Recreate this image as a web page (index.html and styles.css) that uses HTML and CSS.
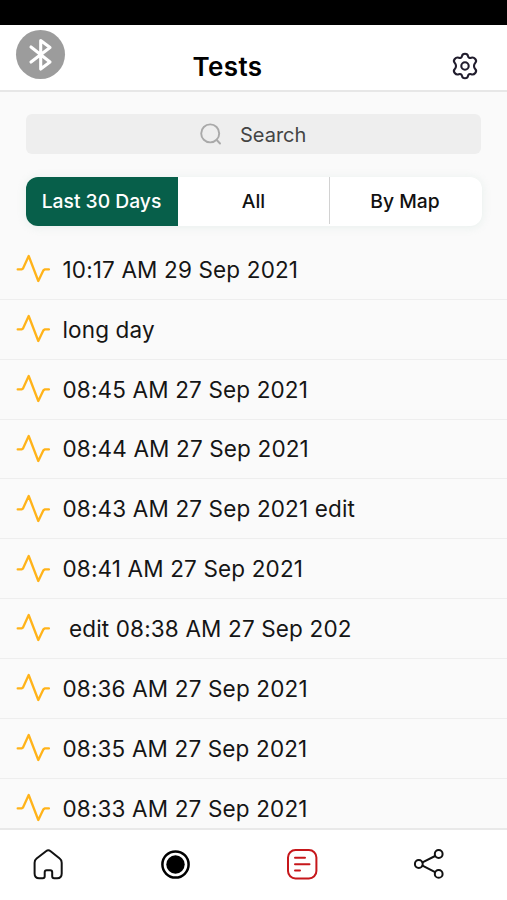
FILE: index.html
```html
<!DOCTYPE html>
<html lang="en">
<head>
<meta charset="utf-8">
<title>Tests</title>
<link rel="stylesheet" href="styles.css">
</head>
<body>
<svg class="symbols" aria-hidden="true">
  <symbol id="pulse" viewBox="0 0 34 30">
    <path d="M1.700 15.400H5.700L7 14.500L12.700 2L22.300 27L27.300 16.500L28.700 15.400H33"/>
  </symbol>
</svg>
<div class="app">
  <div class="status"></div>
  <header class="header">
    <button class="bluetooth" aria-label="Bluetooth">
      <svg width="49" height="49" viewBox="0 0 49 49"><path d="M15 17L34 32L24.700 39V10.500L34 17.500L15 32"/></svg>
    </button>
    <h1 class="title">Tests</h1>
    <button class="settings" aria-label="Settings">
      <svg width="28" height="28" viewBox="0 0 28 28">
        <path d="M11 4.100C11.500 .9 16.500 .9 17 4.100C17.300 5.700 18.700 6.400 20.200 5.800C23.200 4.600 26.700 8.500 24.200 10.900C22.600 12.500 22.600 15.500 24.200 17.100C26.700 19.500 23.200 23.400 20.200 22.200C18.700 21.600 17.300 22.300 17 23.900C16.500 27.100 11.500 27.100 11 23.900C10.700 22.300 9.300 21.600 7.800 22.200C4.800 23.400 1.300 19.500 3.800 17.100C5.400 15.500 5.400 12.500 3.800 10.900C1.300 8.500 4.800 4.600 7.800 5.800C9.300 6.400 10.700 5.700 11 4.100Z"/>
        <circle cx="14" cy="14" r="3.700"/>
      </svg>
    </button>
  </header>
  <main class="content">
    <div class="search">
      <svg width="22" height="22" viewBox="0 0 22 22"><circle cx="10.200" cy="10.400" r="9"/><path d="M17.200 17.500L20 20.500"/></svg>
      <span>Search</span>
    </div>
    <div class="tabs">
      <button class="tab active">Last 30 Days</button>
      <button class="tab">All</button>
      <button class="tab last">By Map</button>
    </div>
    <ul class="list">
      <li class="row"><svg class="pulse"><use href="#pulse"/></svg><span>10:17 AM 29 Sep 2021</span></li>
      <li class="row"><svg class="pulse"><use href="#pulse"/></svg><span>long day</span></li>
      <li class="row"><svg class="pulse"><use href="#pulse"/></svg><span>08:45 AM 27 Sep 2021</span></li>
      <li class="row"><svg class="pulse"><use href="#pulse"/></svg><span>08:44 AM 27 Sep 2021</span></li>
      <li class="row"><svg class="pulse"><use href="#pulse"/></svg><span>08:43 AM 27 Sep 2021 edit</span></li>
      <li class="row"><svg class="pulse"><use href="#pulse"/></svg><span>08:41 AM 27 Sep 2021</span></li>
      <li class="row"><svg class="pulse"><use href="#pulse"/></svg><span>&nbsp;edit 08:38 AM 27 Sep 202</span></li>
      <li class="row"><svg class="pulse"><use href="#pulse"/></svg><span>08:36 AM 27 Sep 2021</span></li>
      <li class="row"><svg class="pulse"><use href="#pulse"/></svg><span>08:35 AM 27 Sep 2021</span></li>
      <li class="row"><svg class="pulse"><use href="#pulse"/></svg><span>08:33 AM 27 Sep 2021</span></li>
    </ul>
  </main>
  <nav class="nav">
    <a class="nav-item"><svg width="32" height="32" viewBox="0 0 32 32"><path d="M2.600 14.700Q2.600 12 4.600 10.500L14 3.200Q16.300 1.500 18.600 3.200L27.700 10.500Q29.700 12 29.700 14.700V25.500Q29.700 30.300 25.100 30.300H22.200Q20.200 30.300 20.200 28.300V24.300Q20.200 22.300 18.200 22.300H14.700Q12.700 22.300 12.700 24.300V28.300Q12.700 30.300 10.700 30.300H7.200Q2.600 30.300 2.600 25.500Z"/></svg></a>
    <a class="nav-item"><svg width="32" height="32" viewBox="0 0 32 32"><circle class="ring" cx="16.500" cy="16.500" r="13.100"/><circle class="dot" cx="16.500" cy="16.500" r="9.200"/></svg></a>
    <a class="nav-item current"><svg width="32" height="32" viewBox="0 0 32 32"><rect x="2" y="2" width="28.400" height="28.400" rx="7.500"/><path d="M9 9.700H19M9 16.200H23.500M9 22.500H14"/></svg></a>
    <a class="nav-item"><svg width="32" height="32" viewBox="0 0 32 32"><circle cx="5.800" cy="16" r="3.900"/><circle cx="25.700" cy="6" r="3.900"/><circle cx="25.700" cy="25.900" r="3.900"/><path d="M9.500 14.300L22.100 8M9.500 17.700L22.100 24.100"/></svg></a>
  </nav>
</div>
</body>
</html>
```

FILE: styles.css
```css
* { box-sizing: border-box; }
body {
  margin: 0;
  font-family: Inter, "Liberation Sans", sans-serif;
  color: #151515;
  background: #fafafa;
}
button { border: 0; padding: 0; background: none; font: inherit; color: inherit; }
svg { display: block; fill: none; stroke-linecap: round; stroke-linejoin: round; }
.symbols { display: none; }
.app { display: flex; flex-direction: column; height: 900px; overflow: hidden; }
.status { flex: 0 0 25px; background: #000; }
.header {
  flex: 0 0 67px;
  display: grid;
  grid-template-columns: 49px 1fr 28px;
  padding: 0 28px 0 16px;
  background: #fff;
  border-bottom: 2px solid #e7e7e7;
}
.bluetooth { width: 49px; height: 49px; margin-top: 5px; border-radius: 50%; background: #9c9c9c; }
.bluetooth svg { stroke: #fff; stroke-width: 3.1; }
.title { margin: 26px 0 0; padding-right: 61px; text-align: center; font-size: 26px; line-height: 31px; font-weight: 600; letter-spacing: .4px; color: #000; }
.settings { height: 28px; margin-top: 27px; }
.settings svg { stroke: #211d2d; stroke-width: 2.1; }
.content { flex: 1 1 0; min-height: 0; overflow: hidden; padding-top: 22px; }
.search {
  display: flex;
  align-items: center;
  gap: 18px;
  height: 40px;
  margin: 0 26px;
  padding-left: 174px;
  border-radius: 6px;
  background: #eee;
  color: #444;
  font-size: 20px;
}
.search span { padding-top: 2px; }
.search svg { stroke: #a9a9a9; stroke-width: 1.9; }
.tabs {
  display: grid;
  grid-template-columns: 152px 151px 1fr;
  height: 49px;
  margin: 23px 25px 0 26px;
  border-radius: 12px;
  background: #fff;
  box-shadow: 0 1px 8px #dce8e4a0;
}
.tab { height: 49px; padding-bottom: 2px; font-size: 19.300px; font-weight: 500; color: #111; }
.tab.active { border-radius: 12px 0 0 12px; background: #075f4a; color: #fff; padding-right: 1px; }
.tab.last { height: 47px; padding: 0 2px 0 0; border-left: 1px solid #d2d2d2; }
.list { list-style: none; margin: 14px 0 0; padding: 0; }
.row {
  display: flex;
  align-items: center;
  height: 59.850px;
  padding-left: 16px;
  border-bottom: 1px solid #eee;
  font-size: 22.500px;
  white-space: nowrap;
}
.row span { margin-left: 12.500px; letter-spacing: .15px; }
.pulse { width: 34px; height: 30px; stroke: #ffb31a; stroke-width: 2.3; }
.nav {
  flex: 0 0 72px;
  display: grid;
  grid-template-columns: repeat(4, 126.800px);
  border-top: 2px solid #e9e9e9;
  background: #fff;
}
.nav-item { display: flex; justify-content: center; padding: 18px 0 0; margin-left: -30px; }
.nav-item svg { stroke: #111; stroke-width: 2; }
.nav-item .ring { stroke: #000; stroke-width: 2.500; }
.nav-item .dot { fill: #000; stroke: none; }
.nav-item.current svg { stroke: #c6171b; }
```
